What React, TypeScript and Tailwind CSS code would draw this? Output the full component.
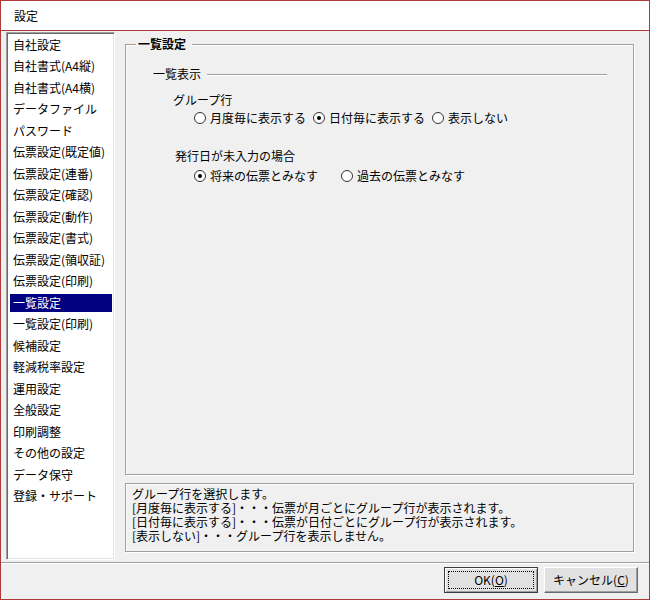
import React from "react";

const items = [
  "自社設定",
  "自社書式(A4縦)",
  "自社書式(A4横)",
  "データファイル",
  "パスワード",
  "伝票設定(既定値)",
  "伝票設定(連番)",
  "伝票設定(確認)",
  "伝票設定(動作)",
  "伝票設定(書式)",
  "伝票設定(領収証)",
  "伝票設定(印刷)",
  "一覧設定",
  "一覧設定(印刷)",
  "候補設定",
  "軽減税率設定",
  "運用設定",
  "全般設定",
  "印刷調整",
  "その他の設定",
  "データ保守",
  "登録・サポート",
];

function Radio({ checked }: { checked?: boolean }) {
  return (
    <span className="w-[12px] h-[12px] rounded-full border border-[#333333] bg-white flex items-center justify-center shrink-0">
      {checked && <span className="w-[4px] h-[4px] rounded-full bg-black" />}
    </span>
  );
}

function Option({ label, checked }: { label: string; checked?: boolean }) {
  return (
    <span className="flex items-center gap-[4px]">
      <Radio checked={checked} />
      <span>{label}</span>
    </span>
  );
}

export default function App() {
  return (
    <div className="w-[650px] h-[600px] bg-[#f0f0f0] border border-[#ac3b3b] flex flex-col text-[12px] leading-[16px] text-black font-['Noto_Sans_CJK_JP','Noto_Sans',sans-serif]">
      {/* title bar */}
      <div className="h-[30px] shrink-0 bg-white border-b border-[#ac3b3b] flex items-center pl-[13px]">
        設定
      </div>

      {/* body */}
      <div className="h-[531px] shrink-0 flex">
        {/* list */}
        <div className="mt-[1px] ml-[5px] w-[109px] h-[528px] bg-white border border-t-[#a0a0a0] border-l-[#a0a0a0] border-r-white border-b-white shadow-[inset_1px_1px_0_#696969,inset_-1px_-1px_0_#e3e3e3] pt-[1px] pl-[3px] pr-[2px]">
          {items.map((it) => {
            const sel = it === "一覧設定";
            return (
              <div key={it} className="h-[21.5px] flex items-center">
                <span
                  className={
                    sel
                      ? "h-[18px] w-full bg-[#000080] text-white flex items-center pl-[3px] whitespace-nowrap"
                      : "h-[18px] w-full flex items-center pl-[3px] whitespace-nowrap"
                  }
                >
                  {it}
                </span>
              </div>
            );
          })}
        </div>

        {/* right column */}
        <div className="ml-[10px] w-[509px] flex flex-col">
          <div className="mt-[13px] h-[431px] border border-[#a0a0a0] shadow-[inset_1px_1px_0_#fff,1px_1px_0_#fff] flex flex-col">
            <span className="-mt-[9px] ml-[10px] w-fit bg-[#f0f0f0] pl-[2px] pr-[6px] font-bold">
              一覧設定
            </span>

            <div className="mt-[14px] ml-[27px] mr-[26px] flex items-center">
              <span>一覧表示</span>
              <span className="ml-[6px] flex-1 border-t border-[#a0a0a0] shadow-[0_1px_0_#fff]" />
            </div>

            <div className="mt-[10px] ml-[47px]">グループ行</div>
            <div className="mt-[2px] ml-[68px] flex items-center gap-[7px]">
              <Option label="月度毎に表示する" />
              <Option label="日付毎に表示する" checked />
              <Option label="表示しない" />
            </div>

            <div className="mt-[22px] ml-[49px]">発行日が未入力の場合</div>
            <div className="mt-[4px] ml-[68px] flex items-center">
              <span className="w-[147px]">
                <Option label="将来の伝票とみなす" checked />
              </span>
              <Option label="過去の伝票とみなす" />
            </div>
          </div>

          <div className="mt-[8px] h-[69px] border border-[#a0a0a0] shadow-[inset_1px_1px_0_#fff,1px_1px_0_#fff] pt-[3px] pl-[6px] leading-[14px]">
            <div>グループ行を選択します。</div>
            <div>[月度毎に表示する]・・・伝票が月ごとにグループ行が表示されます。</div>
            <div>[日付毎に表示する]・・・伝票が日付ごとにグループ行が表示されます。</div>
            <div>[表示しない]・・・グループ行を表示しません。</div>
          </div>
        </div>
      </div>

      {/* separator */}
      <div className="h-[2px] shrink-0 border-t border-[#a0a0a0] bg-white" />

      {/* buttons */}
      <div className="flex-1 flex justify-end items-start pt-[3px] pr-[11px] gap-[6px]">
        <button className="w-[94px] h-[26px] bg-[#e1e1e1] border border-[#3c3c3c] shadow-[inset_1px_1px_0_#fff,inset_-1px_-1px_0_#a0a0a0] p-[3px] flex">
          <span className="flex-1 border border-dotted border-black flex items-center justify-center">
            OK(<span className="underline">O</span>)
          </span>
        </button>
        <button className="w-[94px] h-[26px] bg-[#e1e1e1] border border-t-white border-l-white border-r-[#696969] border-b-[#696969] shadow-[inset_-1px_-1px_0_#a0a0a0] flex items-center justify-center">
          キャンセル(<span className="underline">C</span>)
        </button>
      </div>
    </div>
  );
}
